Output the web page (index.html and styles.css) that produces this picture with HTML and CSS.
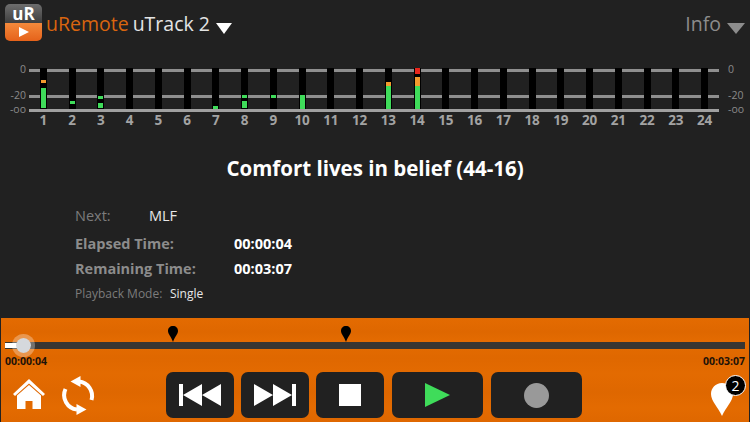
FILE: index.html
```html
<!DOCTYPE html>
<html>

<head>
    <title>uRemote uTrack 2</title>
    <meta charset="UTF-8">
    <link rel="stylesheet" href="styles.css">
</head>

<body>
    <div class="app">
        <div class="header">
            <div class="logo">
                <div class="logo-top">uR</div>
                <div class="logo-bottom">
                    <svg width="10" height="10" viewBox="0 0 10 10"><path d="M0 0 L10 5 L0 10 Z" fill="#fff" /></svg>
                </div>
            </div>
            <span class="brand">uRemote</span>
            <span class="device">uTrack 2</span>
            <span class="caret"></span>
            <span class="info-menu">Info</span>
            <span class="caret caret-gray"></span>
        </div>

        <div class="meter-row">
            <div class="scale">
                <span class="scale-0">0</span>
                <span class="scale-20">-20</span>
                <span class="scale-oo">-oo</span>
            </div>
            <div class="meter">
                <div class="strip">
                    <i class="seg orange" style="top: 12px; height: 3px"></i>
                    <i class="seg green" style="top: 20px; height: 20px"></i>
                </div>
                <div class="strip"><i class="seg green" style="top: 33px; height: 3px"></i></div>
                <div class="strip">
                    <i class="seg green" style="top: 28px; height: 3px"></i>
                    <i class="seg green" style="top: 35px; height: 5px"></i>
                </div>
                <div class="strip"></div>
                <div class="strip"></div>
                <div class="strip"></div>
                <div class="strip"><i class="seg green" style="top: 38px; height: 3px"></i></div>
                <div class="strip">
                    <i class="seg green" style="top: 27px; height: 3px"></i>
                    <i class="seg green" style="top: 33px; height: 7px"></i>
                </div>
                <div class="strip"><i class="seg green" style="top: 27px; height: 3px"></i></div>
                <div class="strip"><i class="seg green" style="top: 27px; height: 14px"></i></div>
                <div class="strip"></div>
                <div class="strip"></div>
                <div class="strip">
                    <i class="seg orange" style="top: 14px; height: 4px"></i>
                    <i class="seg green" style="top: 18px; height: 23px"></i>
                </div>
                <div class="strip">
                    <i class="seg red" style="top: 0; height: 6px"></i>
                    <i class="seg orange" style="top: 9px; height: 9px"></i>
                    <i class="seg green" style="top: 18px; height: 23px"></i>
                </div>
                <div class="strip"></div>
                <div class="strip"></div>
                <div class="strip"></div>
                <div class="strip"></div>
                <div class="strip"></div>
                <div class="strip"></div>
                <div class="strip"></div>
                <div class="strip"></div>
                <div class="strip"></div>
                <div class="strip"></div>
            </div>
            <div class="scale scale-right">
                <span class="scale-0">0</span>
                <span class="scale-20">-20</span>
                <span class="scale-oo">-oo</span>
            </div>
        </div>

        <div class="channels">
            <span>1</span><span>2</span><span>3</span><span>4</span><span>5</span><span>6</span>
            <span>7</span><span>8</span><span>9</span><span>10</span><span>11</span><span>12</span>
            <span>13</span><span>14</span><span>15</span><span>16</span><span>17</span><span>18</span>
            <span>19</span><span>20</span><span>21</span><span>22</span><span>23</span><span>24</span>
        </div>

        <h1 class="song-title">Comfort lives in belief (44-16)</h1>

        <div class="details">
            <div class="next-row">
                <span class="next-label">Next:</span>
                <span class="next-value">MLF</span>
            </div>
            <div class="time-row">
                <span class="time-label">Elapsed Time:</span>
                <span class="time-value">00:00:04</span>
            </div>
            <div class="time-row">
                <span class="time-label">Remaining Time:</span>
                <span class="time-value">00:03:07</span>
            </div>
            <div class="mode-row">
                <span class="mode-label">Playback Mode:</span>
                <span class="mode-value">Single</span>
            </div>
        </div>

        <div class="transport">
            <div class="slider">
                <div class="track">
                    <div class="track-fill"></div>
                </div>
                <div class="thumb"></div>
                <svg class="marker marker-1" width="10" height="16" viewBox="0 0 10 16"><path d="M5 0 C8 0 10 2 10 5 C10 8 7 10 5 16 C3 10 0 8 0 5 C0 2 2 0 5 0 Z" fill="#000" /></svg>
                <svg class="marker marker-2" width="10" height="16" viewBox="0 0 10 16"><path d="M5 0 C8 0 10 2 10 5 C10 8 7 10 5 16 C3 10 0 8 0 5 C0 2 2 0 5 0 Z" fill="#000" /></svg>
            </div>
            <div class="times">
                <span>00:00:04</span>
                <span>00:03:07</span>
            </div>
            <div class="controls">
                <div class="left-icons">
                    <svg class="home" width="32" height="30" viewBox="0 0 32 30">
                        <path d="M16 0 L32 15 L30 17 L16 4.500 L2 17 L0 15 Z" fill="#fff" />
                        <path d="M4 16.500 L16 6 L28 16.500 V30 H19.500 V22 H12.500 V30 H4 Z" fill="#fff" />
                    </svg>
                    <svg class="loop" width="34" height="40" viewBox="0 0 34 40">
                        <path d="M17 5.500 A14.500 14.500 0 0 1 29.500 24" fill="none" stroke="#fff" stroke-width="4" />
                        <path d="M8.500 5.500 L18.500 0 V11 Z" fill="#fff" />
                        <path d="M3.500 13 A14.500 14.500 0 0 0 15 33.500" fill="none" stroke="#fff" stroke-width="4" />
                        <path d="M24.500 33.500 L14.500 28 V39 Z" fill="#fff" />
                    </svg>
                </div>
                <div class="buttons">
                    <div class="btn">
                        <svg width="42" height="22" viewBox="0 0 42 22"><path d="M0 0 H4 V22 H0 Z M4 11 L23 0 V22 Z M23 11 L42 0 V22 Z" fill="#fff" /></svg>
                    </div>
                    <div class="btn">
                        <svg width="42" height="22" viewBox="0 0 42 22"><path d="M42 0 H38 V22 H42 Z M38 11 L19 0 V22 Z M19 11 L0 0 V22 Z" fill="#fff" /></svg>
                    </div>
                    <div class="btn">
                        <div class="stop"></div>
                    </div>
                    <div class="btn btn-wide">
                        <svg width="25" height="24" viewBox="0 0 25 24"><path d="M0 0 L25 12 L0 24 Z" fill="#3fdc5a" /></svg>
                    </div>
                    <div class="btn btn-wide">
                        <div class="record"></div>
                    </div>
                </div>
                <div class="pin-box">
                    <svg width="22" height="33" viewBox="0 0 22 33"><path d="M11 0 C17.500 0 22 5 22 11 C22 18 15 24 11 33 C7 24 0 18 0 11 C0 5 4.500 0 11 0 Z" fill="#fff" /></svg>
                    <span class="badge">2</span>
                </div>
            </div>
        </div>
    </div>
</body>

</html>
```

FILE: styles.css
```css
* {
    box-sizing: border-box;
}

body {
    margin: 0;
    background-color: #000;
    font-family: "Open Sans", sans-serif;
}

.app {
    width: 750px;
    height: 422px;
    padding: 0 1px;
    background-color: #212121;
    display: flex;
    flex-direction: column;
    overflow: hidden;
}

.header {
    height: 68px;
    padding: 4px 4px 0 4px;
    display: flex;
    align-items: flex-start;
    font-size: 19.500px;
    line-height: 40px;
}

.logo {
    width: 37px;
    height: 37px;
    border-radius: 5px;
    margin-right: 4px;
    flex-shrink: 0;
}

.logo-top {
    height: 19px;
    border-radius: 5px 5px 0 0;
    background: linear-gradient(#6e6e6e, #3e3e3e);
    color: #fff;
    font-size: 17px;
    font-weight: bold;
    line-height: 19px;
    text-align: center;
}

.logo-bottom {
    height: 18px;
    border-radius: 0 0 5px 5px;
    background: linear-gradient(#f48a3c, #e5621a);
    display: flex;
    align-items: center;
    justify-content: center;
}

.brand {
    color: #d9650f;
    margin-right: 4px;
}

.device {
    color: #e4e4e4;
}

.caret {
    width: 0;
    height: 0;
    margin: 19px 0 0 6px;
    border-left: 8.500px solid transparent;
    border-right: 8.500px solid transparent;
    border-top: 11px solid #fff;
}

.caret-gray {
    margin-left: 6px;
    border-left-width: 9px;
    border-right-width: 9px;
    border-top-color: #8c8c8c;
}

.info-menu {
    margin-left: auto;
    color: #8c8c8c;
}

.meter-row {
    display: flex;
    height: 45px;
}

.scale {
    width: 28px;
    position: relative;
    color: #8a8a8a;
    font-size: 10.500px;
    line-height: 12px;
}

.scale span {
    position: absolute;
    right: 3px;
}

.scale-right span {
    right: auto;
    left: 9px;
}

.scale-0 {
    top: -5px;
}

.scale-20 {
    top: 21px;
}

.scale-oo {
    top: 35px;
}

.meter {
    width: 690px;
    height: 45px;
    display: grid;
    grid-template-columns: repeat(24, 1fr);
    background-image:
        linear-gradient(#8f8f8f, #8f8f8f),
        linear-gradient(#8f8f8f, #8f8f8f),
        linear-gradient(#a0a0a0, #a0a0a0);
    background-size: 100% 3px;
    background-repeat: no-repeat;
    background-position: 0 1px, 0 27px, 0 41px;
}

.strip {
    width: 7px;
    height: 41px;
    justify-self: center;
    background-color: #000;
    position: relative;
}

.seg {
    position: absolute;
    left: 1px;
    width: 5px;
}

.green {
    background-color: #3fdc5a;
}

.orange {
    background-color: #f29a2e;
}

.red {
    background-color: #e8261c;
}

.channels {
    width: 690px;
    margin: -1px 0 0 28px;
    display: grid;
    grid-template-columns: repeat(24, 1fr);
    color: #a3a3a3;
    font-size: 13.500px;
    font-weight: bold;
    line-height: 16px;
    text-align: center;
}

.song-title {
    margin: 25px 0 0;
    color: #fff;
    font-size: 20.500px;
    font-weight: bold;
    line-height: 30px;
    text-align: center;
}

.details {
    padding: 22px 0 0 74px;
}

.next-row {
    display: flex;
    font-size: 14.500px;
    line-height: 22px;
    margin-bottom: 4px;
}

.next-label {
    width: 74px;
    color: #7c7c7c;
}

.next-value {
    color: #e8e8e8;
}

.time-row {
    display: flex;
    font-size: 14.500px;
    font-weight: bold;
    line-height: 25px;
}

.time-label {
    width: 159px;
    color: #8c8c8c;
}

.time-value {
    color: #fff;
}

.mode-row {
    display: flex;
    font-size: 12px;
    line-height: 18px;
    margin-top: 4px;
}

.mode-label {
    width: 95px;
    color: #7c7c7c;
}

.mode-value {
    color: #e8e8e8;
}

.transport {
    margin-top: auto;
    height: 104px;
    background-color: #e26900;
    background-image: linear-gradient(180deg,
        rgba(255, 140, 20, 0.06),
        rgba(160, 70, 0, 0.05) 14px,
        rgba(255, 140, 20, 0.07) 24px,
        rgba(160, 70, 0, 0.04) 40px,
        rgba(255, 140, 20, 0.05) 56px,
        rgba(160, 70, 0, 0.05) 74px,
        rgba(255, 140, 20, 0.05) 90px,
        rgba(160, 70, 0, 0.05));
    display: flex;
    flex-direction: column;
}

.slider {
    height: 32px;
    padding: 24px 4px 0;
    position: relative;
}

.track {
    height: 7px;
    background-color: #373532;
}

.track-fill {
    width: 18px;
    height: 5px;
    position: relative;
    top: 1px;
    background-color: #fff;
}

.thumb {
    position: absolute;
    left: 11px;
    top: 16px;
    width: 23px;
    height: 23px;
    border-radius: 50%;
    background-color: #d5d8dc;
    background-clip: padding-box;
    border: 4px solid rgba(255, 255, 255, 0.3);
}

.marker {
    position: absolute;
    top: 8px;
}

.marker-1 {
    left: 167px;
}

.marker-2 {
    left: 340px;
}

.times {
    display: flex;
    justify-content: space-between;
    padding: 4px 4px 0;
    color: #1d1208;
    font-size: 10.500px;
    font-weight: bold;
    line-height: 15px;
}

.controls {
    display: flex;
    padding-top: 3px;
}

.left-icons {
    width: 165px;
    padding: 4px 0 0 12px;
    display: flex;
    gap: 17px;
}

.left-icons .home {
    margin-top: 3px;
}

.buttons {
    display: flex;
    gap: 7px;
}

.btn {
    width: 68px;
    height: 46px;
    border-radius: 7px;
    background-color: #212121;
    display: flex;
    align-items: center;
    justify-content: center;
}

.btn-wide {
    width: 91px;
    margin-left: 1px;
}

.stop {
    width: 22px;
    height: 22px;
    background-color: #fff;
}

.record {
    width: 25px;
    height: 25px;
    border-radius: 50%;
    background-color: #999;
}

.pin-box {
    margin-left: auto;
    margin-right: 16px;
    padding-top: 11px;
    position: relative;
}

.badge {
    position: absolute;
    left: 14px;
    top: 3px;
    width: 21px;
    height: 21px;
    border-radius: 50%;
    border: 1px solid #fff;
    background-color: #000;
    color: #fff;
    font-size: 14px;
    line-height: 19px;
    text-align: center;
}
```
